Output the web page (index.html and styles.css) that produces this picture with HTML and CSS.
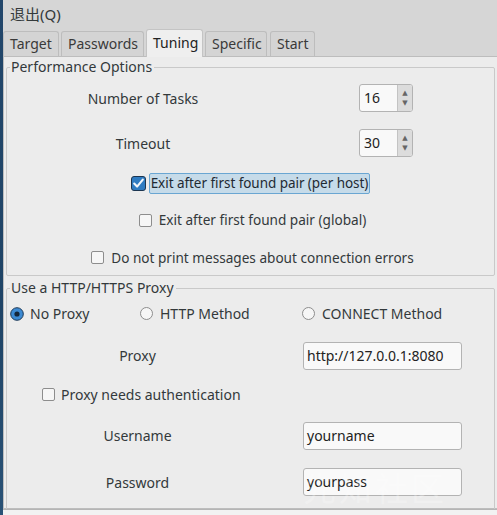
FILE: index.html
```html
<!DOCTYPE html>
<html>
<head>
<meta charset="utf-8">
<link rel="stylesheet" href="styles.css">
</head>
<body>
<div class="app">
  <div class="strip"></div>
  <div class="window">
    <div class="menubar"><span class="menu-item">退出(Q)</span></div>
    <div class="tabs">
      <div class="tab">Target</div>
      <div class="tab">Passwords</div>
      <div class="tab active">Tuning</div>
      <div class="tab">Specific</div>
      <div class="tab">Start</div>
    </div>
    <div class="panel">
      <fieldset class="group perf">
        <legend>Performance Options</legend>
        <div class="row r1 grid-spin">
          <span class="lbl">Number of Tasks</span>
          <div class="spin"><span class="spin-val">16</span><span class="spin-arrows"><i>▲</i><i>▼</i></span></div>
        </div>
        <div class="row r2 grid-spin">
          <span class="lbl">Timeout</span>
          <div class="spin"><span class="spin-val">30</span><span class="spin-arrows"><i>▲</i><i>▼</i></span></div>
        </div>
        <div class="row r3 centered">
          <svg class="cb-checked" width="15" height="15" viewBox="0 0 15 15"><rect x="0.5" y="0.5" width="14" height="14" rx="2.5" fill="#2f7cc2" stroke="#1c3550"/><path d="M3.2 7.6 L6.1 10.6 L11.8 3.6" fill="none" stroke="#f2f6fa" stroke-width="2.1" stroke-linecap="round" stroke-linejoin="round"/></svg>
          <span class="focus-lbl">Exit after first found pair (per host)</span>
        </div>
        <div class="row r4 centered">
          <span class="cb"></span>
          <span class="cb-lbl">Exit after first found pair (global)</span>
        </div>
        <div class="row r5 centered">
          <span class="cb"></span>
          <span class="cb-lbl">Do not print messages about connection errors</span>
        </div>
      </fieldset>
      <fieldset class="group proxy">
        <legend>Use a HTTP/HTTPS Proxy</legend>
        <div class="row p1 radios">
          <label class="radio-item"><svg class="rd" width="14" height="14" viewBox="0 0 14 14"><circle cx="7" cy="7" r="6.3" fill="#3c8ad3" stroke="#1e3a57"/><circle cx="7" cy="7" r="2.6" fill="#14263a"/></svg>No Proxy</label>
          <label class="radio-item"><span class="rd-off"></span>HTTP Method</label>
          <label class="radio-item"><span class="rd-off"></span>CONNECT Method</label>
        </div>
        <div class="row p2 grid-entry">
          <span class="lbl">Proxy</span>
          <div class="entry">http://127.0.0.1:8080</div>
        </div>
        <div class="row p3 auth">
          <span class="cb"></span>
          <span class="cb-lbl">Proxy needs authentication</span>
        </div>
        <div class="row p4 grid-entry">
          <span class="lbl">Username</span>
          <div class="entry">yourname</div>
        </div>
        <div class="row p5 grid-entry">
          <span class="lbl">Password</span>
          <div class="entry">yourpass</div>
        </div>
      </fieldset>
    </div>
    <div class="output">Iv.hvdl.l.hl.l.d.lh.f.r.l.hvll.lhl.l.Lh.l.hlr.I.d.bI.Ll.l.h.l.l.d.lhl.l</div>
    <div class="watermark">先知社区</div>
  </div>
</div>
</body>
</html>
```

FILE: styles.css
```css
* { box-sizing: border-box; }
html, body { margin: 0; padding: 0; }
body {
  width: 497px;
  height: 515px;
  overflow: hidden;
  background: #d6d6d6;
  font-family: "Noto Sans", "Noto Sans CJK SC", sans-serif;
  font-size: 14px;
  color: #33393b;
}
.app {
  display: flex;
  height: 515px;
}
.strip {
  width: 3px;
  flex: none;
  background: linear-gradient(#23476b, #1f4466 60%, #2a5276);
}
.window {
  flex: 1;
  display: flex;
  flex-direction: column;
  position: relative;
  min-width: 0;
}
.menubar {
  height: 29px;
  display: flex;
  align-items: center;
  padding-left: 7px;
  padding-bottom: 2px;
}
.menu-item { line-height: 18px; font-size: 15px; }
.tabs {
  height: 27px;
  display: flex;
  align-items: flex-end;
  gap: 2px;
  position: relative;
  z-index: 2;
}
.tab {
  height: 25px;
  padding: 0 6px;
  background: #d4d4d4;
  border: 1px solid #bdbdbd;
  border-bottom: none;
  border-radius: 3px 3px 0 0;
  color: #3a3a3a;
  line-height: 24px;
}
.tab:nth-child(1) { width: 56px; }
.tab:nth-child(2) { width: 83px; }
.tab:nth-child(3) { width: 57px; }
.tab:nth-child(4) { width: 62px; }
.tab:nth-child(5) { width: 45px; margin-left: 1px; }
.tab.active {
  height: 28px;
  margin-bottom: -1px;
  background: #efefef;
  border-color: #c4c4c4;
  color: #222;
  line-height: 26px;
}
.panel {
  background: #ececec;
  border: 1px solid #bdbdbd;
  border-right: none;
  padding: 0 2px;
  height: 453px;
  flex: none;
}
.group {
  margin: 0;
  padding: 0;
  border: 1px solid #c9c9c9;
  border-radius: 2px;
  min-width: 0;
}
.group legend {
  margin-left: 3px;
  padding: 0 2px 0 1px;
  line-height: 18px;
  color: #33393b;
}
.perf { margin-top: 1px; }
.proxy { margin-top: 3px; }
.row { display: flex; align-items: center; }
.r1 { height: 44px; }
.r2 { height: 46px; }
.r3 { height: 34px; }
.r4 { height: 40px; }
.r5 { height: 35px; }
.grid-spin {
  display: grid;
  grid-template-columns: 272px 1fr;
  align-items: center;
}
.lbl { text-align: center; }
.spin {
  margin-left: 80px;
  width: 54px;
  height: 28px;
  display: flex;
  border: 1px solid #b3b3b3;
  border-radius: 3px;
  background: #f9f9f9;
  overflow: hidden;
}
.spin-val {
  flex: 1;
  padding-left: 4px;
  line-height: 26px;
  color: #222;
}
.spin-arrows {
  width: 15px;
  background: #dcdcdc;
  border-left: 1px solid #c4c4c4;
  display: flex;
  flex-direction: column;
  justify-content: center;
  align-items: center;
  gap: 3px;
}
.spin-arrows i {
  font-style: normal;
  font-size: 7px;
  line-height: 7px;
  color: #666;
  font-family: "DejaVu Sans", sans-serif;
}
.centered {
  justify-content: center;
  padding-left: 4px;
}
.r3.centered { padding-left: 0; }
.cb-checked { margin-right: 3px; flex: none; }
.focus-lbl {
  height: 21px;
  line-height: 19px;
  padding: 0 1px;
  font-size: 13.5px;
  letter-spacing: -0.05px;
  background: #c6dbe9;
  border: 1px solid #6aa6d2;
  border-radius: 2px;
  color: #1f2a33;
}
.cb {
  width: 13px;
  height: 13px;
  flex: none;
  border: 1px solid #8d8d8d;
  border-radius: 2px;
  background: #f6f6f6;
  margin-right: 7px;
}
.cb-lbl { line-height: 18px; font-size: 13.6px; }
.radios {
  display: grid;
  grid-template-columns: 130px 162px 1fr;
  padding-left: 3px;
}
.p1 { height: 33px; }
.radio-item {
  display: flex;
  align-items: center;
  gap: 6px;
}
.rd { flex: none; }
.rd-off {
  width: 13px;
  height: 13px;
  border: 1px solid #8d8d8d;
  border-radius: 50%;
  background: #f6f6f6;
  flex: none;
}
.radio-item:nth-child(2), .radio-item:nth-child(3) { gap: 7px; }
.grid-entry {
  display: grid;
  grid-template-columns: 261px 1fr;
  align-items: center;
}
.p2 { height: 51px; }
.p3 { height: 27px; padding-left: 35px; }
.p3 .cb { margin-right: 6px; }
.p3 .cb-lbl { font-size: 14px; }
.p4 { height: 55px; }
.p5 { height: 38px; }
.proxy { padding-bottom: 10px; }
.entry {
  margin-left: 35px;
  width: 159px;
  height: 28px;
  border: 1px solid #b3b3b3;
  border-radius: 3px;
  background: #f9f9f9;
  padding-left: 3px;
  line-height: 26px;
  color: #222;
}
.output {
  flex: 1;
  background: #f2f2f2;
  border-top: 1px solid #b5b5b5;
  padding: 2px 0 0 4px;
  line-height: 18px;
  white-space: nowrap;
  overflow: hidden;
  letter-spacing: 4px;
}
.watermark {
  position: absolute;
  left: 300px;
  top: 463px;
  font-size: 33px;
  letter-spacing: 3px;
  color: rgba(255, 255, 255, 0.25);
  pointer-events: none;
}
```
